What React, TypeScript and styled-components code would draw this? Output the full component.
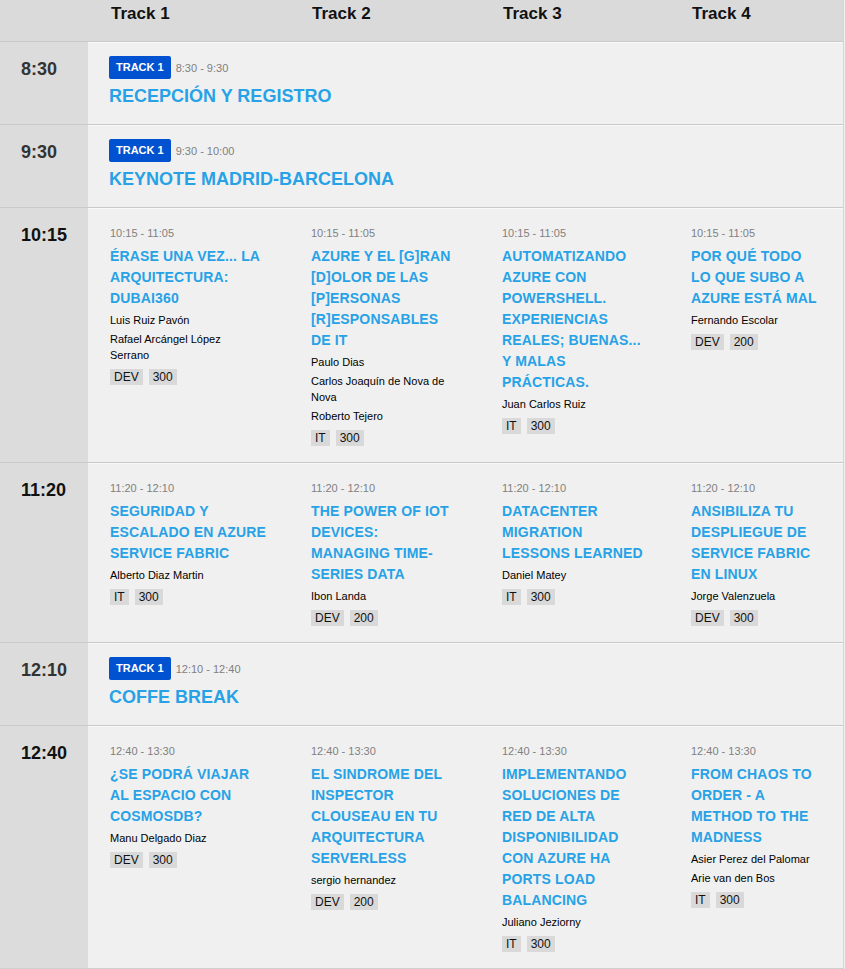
import React from 'react';
import styled, { createGlobalStyle } from 'styled-components';

const GlobalStyle = createGlobalStyle`
  body {
    margin: 0;
    background: #f0f0f0;
    font-family: "Liberation Sans", Arial, sans-serif;
  }
  * {
    box-sizing: border-box;
  }
`;

const Page = styled.div`
  width: 844px;
  border-right: 1px solid #d6d6d6;
  border-bottom: 1px solid #cfcfcf;
  background: #f0f0f0;
`;

const Grid = styled.div`
  display: grid;
  grid-template-columns: 88px 201px 191px 189px 1fr;
`;

const HeaderRow = styled(Grid)`
  height: 41px;
  background: #dadada;
`;

const HeaderCell = styled.div`
  padding: 3px 0 0 23px;
  font-size: 17px;
  line-height: 22px;
  font-weight: bold;
  color: #111;
`;

const Row = styled(Grid)`
  border-top: 1px solid #c9c9c9;
  box-shadow: inset 0 1px 0 #f9f9f9;
`;

const TimeCell = styled.div<{ $dim?: boolean }>`
  background: #dcdcdc;
  padding: 16px 0 0 21px;
  font-size: 18px;
  line-height: 22px;
  font-weight: bold;
  color: ${(p) => (p.$dim ? '#333' : '#111')};
`;

const SpanCell = styled.div`
  grid-column: 2 / -1;
  padding: 14px 22px 17px 21px;
`;

const BadgeLine = styled.div`
  display: flex;
  align-items: center;
  gap: 5px;
`;

const Badge = styled.span`
  display: inline-block;
  height: 23px;
  line-height: 23px;
  padding: 0 7px;
  border-radius: 2px;
  background: #0052d0;
  color: #fff;
  font-size: 11px;
  font-weight: bold;
`;

const Range = styled.div`
  font-size: 11px;
  line-height: 14px;
  color: #808080;
`;

const BigTitle = styled.div`
  margin-top: 6px;
  font-size: 18px;
  line-height: 22px;
  font-weight: bold;
  color: #27a2e6;
`;

const Cell = styled.div`
  padding: 18px 20px 16px 22px;
  &:last-child {
    padding-right: 24px;
  }
`;

const Title = styled.div`
  margin-top: 6px;
  font-size: 14px;
  line-height: 21px;
  font-weight: bold;
  letter-spacing: 0.15px;
  color: #27a2e6;
`;

const Speakers = styled.div`
  margin-top: 3px;
  max-width: 150px;
  display: flex;
  flex-direction: column;
  gap: 3px;
`;

const Speaker = styled.div`
  font-size: 11px;
  line-height: 16px;
  color: #000;
`;

const Tags = styled.div`
  margin-top: 6px;
  display: flex;
  gap: 6px;
`;

const Tag = styled.span`
  height: 16px;
  line-height: 16px;
  padding: 0 4px;
  background: #d9d9d9;
  color: #111;
  font-size: 12px;
`;

interface ISession {
  title: string;
  speakers: string[];
  tags: string[];
}

interface IRow {
  time: string;
  range: string;
  single?: string;
  sessions?: ISession[];
}

const rows: IRow[] = [
  { time: '8:30', range: '8:30 - 9:30', single: 'RECEPCIÓN Y REGISTRO' },
  { time: '9:30', range: '9:30 - 10:00', single: 'KEYNOTE MADRID-BARCELONA' },
  {
    time: '10:15',
    range: '10:15 - 11:05',
    sessions: [
      {
        title: 'ÉRASE UNA VEZ... LA ARQUITECTURA: DUBAI360',
        speakers: ['Luis Ruiz Pavón', 'Rafael Arcángel López Serrano'],
        tags: ['DEV', '300'],
      },
      {
        title: 'AZURE Y EL [G]RAN [D]OLOR DE LAS [P]ERSONAS [R]ESPONSABLES DE IT',
        speakers: ['Paulo Dias', 'Carlos Joaquín de Nova de Nova', 'Roberto Tejero'],
        tags: ['IT', '300'],
      },
      {
        title: 'AUTOMATIZANDO AZURE CON POWERSHELL. EXPERIENCIAS REALES; BUENAS... Y MALAS PRÁCTICAS.',
        speakers: ['Juan Carlos Ruiz'],
        tags: ['IT', '300'],
      },
      {
        title: 'POR QUÉ TODO LO QUE SUBO A AZURE ESTÁ MAL',
        speakers: ['Fernando Escolar'],
        tags: ['DEV', '200'],
      },
    ],
  },
  {
    time: '11:20',
    range: '11:20 - 12:10',
    sessions: [
      {
        title: 'SEGURIDAD Y ESCALADO EN AZURE SERVICE FABRIC',
        speakers: ['Alberto Diaz Martin'],
        tags: ['IT', '300'],
      },
      {
        title: 'THE POWER OF IOT DEVICES: MANAGING TIME-SERIES DATA',
        speakers: ['Ibon Landa'],
        tags: ['DEV', '200'],
      },
      {
        title: 'DATACENTER MIGRATION LESSONS LEARNED',
        speakers: ['Daniel Matey'],
        tags: ['IT', '300'],
      },
      {
        title: 'ANSIBILIZA TU DESPLIEGUE DE SERVICE FABRIC EN LINUX',
        speakers: ['Jorge Valenzuela'],
        tags: ['DEV', '300'],
      },
    ],
  },
  { time: '12:10', range: '12:10 - 12:40', single: 'COFFE BREAK' },
  {
    time: '12:40',
    range: '12:40 - 13:30',
    sessions: [
      {
        title: '¿SE PODRÁ VIAJAR AL ESPACIO CON COSMOSDB?',
        speakers: ['Manu Delgado Diaz'],
        tags: ['DEV', '300'],
      },
      {
        title: 'EL SINDROME DEL INSPECTOR CLOUSEAU EN TU ARQUITECTURA SERVERLESS',
        speakers: ['sergio hernandez'],
        tags: ['DEV', '200'],
      },
      {
        title: 'IMPLEMENTANDO SOLUCIONES DE RED DE ALTA DISPONIBILIDAD CON AZURE HA PORTS LOAD BALANCING',
        speakers: ['Juliano Jeziorny'],
        tags: ['IT', '300'],
      },
      {
        title: 'FROM CHAOS TO ORDER - A METHOD TO THE MADNESS',
        speakers: ['Asier Perez del Palomar', 'Arie van den Bos'],
        tags: ['IT', '300'],
      },
    ],
  },
];

const tracks = ['Track 1', 'Track 2', 'Track 3', 'Track 4'];

function App() {
  return (
    <Page>
      <GlobalStyle />
      <HeaderRow>
        <div />
        {tracks.map((t) => (
          <HeaderCell key={t}>{t}</HeaderCell>
        ))}
      </HeaderRow>
      {rows.map((row) => (
        <Row key={row.time}>
          <TimeCell $dim={!!row.single}>{row.time}</TimeCell>
          {row.single ? (
            <SpanCell>
              <BadgeLine>
                <Badge>TRACK 1</Badge>
                <Range>{row.range}</Range>
              </BadgeLine>
              <BigTitle>{row.single}</BigTitle>
            </SpanCell>
          ) : (
            row.sessions!.map((s) => (
              <Cell key={s.title}>
                <Range>{row.range}</Range>
                <Title>{s.title}</Title>
                <Speakers>
                  {s.speakers.map((sp) => (
                    <Speaker key={sp}>{sp}</Speaker>
                  ))}
                </Speakers>
                <Tags>
                  {s.tags.map((tag) => (
                    <Tag key={tag}>{tag}</Tag>
                  ))}
                </Tags>
              </Cell>
            ))
          )}
        </Row>
      ))}
    </Page>
  );
}

export default App;
